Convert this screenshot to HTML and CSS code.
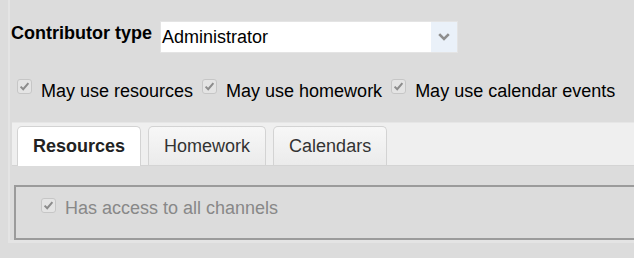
FILE: index.html
```html
<!doctype html>
<html lang="en">
 <head>
  <meta charset="UTF-8">
  <title>Contributor</title>
  <link rel="stylesheet" href="styles.css">
 </head>
 <body>
  <div class="panel">

	<div class="type-row">
		<span class="type-label">Contributor type</span>
		<div class="select">
			<span class="select-value">Administrator</span>
			<span class="select-arrow">
				<svg width="12" height="8" viewBox="0 0 12 8"><path d="M1.2 1.2 L6 6 L10.8 1.2" fill="none" stroke="#8e8e8e" stroke-width="2.6"/></svg>
			</span>
		</div>
	</div>

	<div class="perm-row">
		<span class="check"><svg width="15" height="15" viewBox="0 0 15 15"><rect x="0.5" y="0.5" width="14" height="14" rx="2.5" fill="#e4e4e4" stroke="#c6c6c6"/><path d="M3.6 7.6 L6.2 10.2 L11.4 4.2" fill="none" stroke="#8c8c8c" stroke-width="2"/></svg></span>
		<span class="perm-text">May use resources</span>
		<span class="check"><svg width="15" height="15" viewBox="0 0 15 15"><rect x="0.5" y="0.5" width="14" height="14" rx="2.5" fill="#e4e4e4" stroke="#c6c6c6"/><path d="M3.6 7.6 L6.2 10.2 L11.4 4.2" fill="none" stroke="#8c8c8c" stroke-width="2"/></svg></span>
		<span class="perm-text">May use homework</span>
		<span class="check"><svg width="15" height="15" viewBox="0 0 15 15"><rect x="0.5" y="0.5" width="14" height="14" rx="2.5" fill="#e4e4e4" stroke="#c6c6c6"/><path d="M3.6 7.6 L6.2 10.2 L11.4 4.2" fill="none" stroke="#8c8c8c" stroke-width="2"/></svg></span>
		<span class="perm-text">May use calendar events</span>
	</div>

	<div class="tabs">
		<span class="tab active">Resources</span>
		<span class="tab">Homework</span>
		<span class="tab">Calendars</span>
	</div>

	<div class="channels">
		<span class="check"><svg width="15" height="15" viewBox="0 0 15 15"><rect x="0.5" y="0.5" width="14" height="14" rx="2.5" fill="#e4e4e4" stroke="#c6c6c6"/><path d="M3.6 7.6 L6.2 10.2 L11.4 4.2" fill="none" stroke="#8c8c8c" stroke-width="2"/></svg></span>
		<span class="channels-text">Has access to all channels</span>
	</div>

  </div>
 </body>
</html>
```

FILE: styles.css
```css
/* reset */
*{margin:0;padding:0;box-sizing:border-box}

body{
	background-color:#dcdcdc;
	font-family:"Liberation Sans",Arial,sans-serif;
	font-size:18px;
	line-height:21px;
	color:#111;
	overflow:hidden;
}

/* panel runs off the right edge, so no right border */
.panel{
	margin-left:8px;
	border-left:2px solid #e4e4e4;
	border-bottom:3px solid #e4e4e4;
}

/* contributor type */
.type-row{
	display:flex;
	align-items:flex-start;
	padding-top:21px;
	margin-left:1px;
}
.type-label{
	font-weight:bold;
	color:#000;
	margin-top:2px;
	margin-right:8px;
}
.select{
	display:flex;
	width:298px;
	height:32px;
	border:1px solid #e4e4e4;
	background-color:#fff;
}
.select-value{
	flex:1;
	padding-top:5px;
	padding-left:1px;
	color:#000;
}
.select-arrow{
	width:26px;
	background-color:#eaf1f9;
	display:flex;
	align-items:center;
	justify-content:center;
}

/* permissions */
.perm-row{
	display:flex;
	align-items:flex-start;
	margin-top:26px;
	margin-left:7px;
}
.check{
	display:block;
	width:15px;
	height:15px;
	margin-right:9px;
}
.check svg{display:block}
.perm-text{
	margin-top:2px;
	margin-right:9px;
	color:#000;
}

/* tabs */
.tabs{
	display:flex;
	align-items:flex-start;
	margin-top:20px;
	margin-left:2px;
	padding:3px 0 0 5px;
	height:44px;
	background-color:#efefef;
	border-top:1px solid #e6e6e6;
	border-bottom:1px solid #d4d4d4;
}
.tab{
	height:39px;
	padding:9px 15px 0;
	margin-right:7px;
	border:1px solid #d3d3d3;
	border-bottom:none;
	border-radius:5px 5px 0 0;
	background:linear-gradient(#f7f7f7,#ebebeb);
	color:#333;
}
.tab.active{
	height:40px;
	background:#fff;
	font-weight:bold;
	color:#222;
}

/* channels box */
.channels{
	display:flex;
	align-items:flex-start;
	margin-top:19px;
	margin-left:4px;
	padding:10px 0 19px 25px;
	border:2px solid #9b9b9b;
	border-right:none;
}
.channels .check{margin-top:1px}
.channels-text{
	margin-top:1px;
	color:#888;
}
```
